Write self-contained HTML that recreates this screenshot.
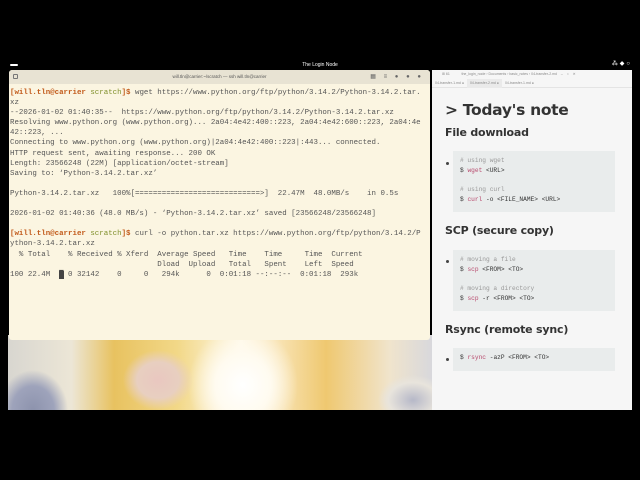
<!DOCTYPE html>
<html><head><meta charset="utf-8"><style>
*{margin:0;padding:0;box-sizing:border-box}
body{width:640px;height:480px;background:#000;position:relative;overflow:hidden;font-family:"Liberation Sans",sans-serif}
.top{position:absolute;left:0;top:60px;width:640px;height:10px;color:#fff;font-size:5px;text-align:center;line-height:10px}
.wall{position:absolute;left:8px;top:335px;width:424px;height:75px;
background:
radial-gradient(ellipse 35px 40px at 25px 75px,#8d93ad 0,#9ea3bb 60%,transparent 100%),
radial-gradient(ellipse 35px 30px at 150px 45px,#e9c7c0 0,#e8cfc0 60%,transparent 100%),
radial-gradient(ellipse 55px 60px at 235px 50px,#fff 0,#fffbf0 50%,transparent 100%),
radial-gradient(ellipse 35px 25px at 405px 65px,#b6b8c8 0,#e8e4dc 70%,transparent 100%),
linear-gradient(90deg,#d8d6d0 0,#ece6d6 15%,#e8c260 25%,#f2d888 40%,#fff8e8 55%,#efc870 75%,#f0e4cc 90%,#d8d8dc 100%)}
.term{position:absolute;left:9px;top:70px;width:421px;height:270px;background:#fbf5e1;border-radius:3px;overflow:hidden}
.tbar{height:14px;background:#e8e3d3;font-size:4.5px;color:#555;text-align:center;line-height:14px;position:relative}
.tbar .l{position:absolute;left:4px;top:4px;width:5px;height:5px;border:1px solid #777;border-radius:1px}
.tbar .r{position:absolute;right:6px;top:0;font-size:6px;color:#666;letter-spacing:3px}
pre{font-family:"Liberation Mono",monospace;font-size:7.45px;line-height:10.1px;color:#555;padding:4px 0 0 1px;white-space:pre}
.p{color:#c25a1a;font-weight:bold}.g{color:#7f8f2a}
.cur{background:#444;color:#444}
.note{position:absolute;left:432px;top:70px;width:200px;height:340px;background:#f6f6f6}
.nbar{height:9px;font-size:3.5px;color:#888;line-height:9px;padding-left:10px;white-space:nowrap;overflow:hidden}
.tabs{height:9px;font-size:3.5px;color:#888;line-height:9px;white-space:nowrap;border-bottom:1px solid #e4e4e4}
.tabs span{display:inline-block;padding:0 3px}
.tabs .a{background:#eaeaea}
h1{position:absolute;left:13px;top:31px;font-size:15.5px;color:#333;font-weight:bold;font-family:"DejaVu Sans",sans-serif;letter-spacing:-0.3px}
h2{position:absolute;left:13px;font-size:11px;color:#333;font-weight:bold;font-family:"DejaVu Sans",sans-serif;letter-spacing:-0.2px}
.code{position:absolute;left:21px;width:162px;background:#e9ecec;font-family:"Liberation Mono",monospace;font-size:6.2px;line-height:9.8px;color:#333;padding:5px 0 4px 7px;white-space:pre}
.code i{font-style:normal;color:#999}.code b{font-weight:normal;color:#b84b6e}
.dot{position:absolute;left:14px;width:3px;height:3px;background:#444;border-radius:50%}
</style></head><body>
<div class="top">The Login Node</div>
<div style="position:absolute;left:10px;top:64px;width:8px;height:2px;background:#fff;border-radius:1px"></div>
<div style="position:absolute;right:8px;top:60px;color:#fff;font-size:6px;letter-spacing:2px">⁂◆○</div>
<div class="wall"></div>
<div class="term">
<div class="tbar"><div class="l"></div>will.tln@carrier:~/scratch — ssh will.tln@carrier<div class="r">▦ ≡ ● ● ●</div></div>
<pre><span class="p">[will.tln@carrier </span><span class="g">scratch</span><span class="p">]$</span> wget https://www.python.org/ftp/python/3.14.2/Python-3.14.2.tar.
xz
--2026-01-02 01:40:35--  https://www.python.org/ftp/python/3.14.2/Python-3.14.2.tar.xz
Resolving www.python.org (www.python.org)... 2a04:4e42:400::223, 2a04:4e42:600::223, 2a04:4e
42::223, ...
Connecting to www.python.org (www.python.org)|2a04:4e42:400::223|:443... connected.
HTTP request sent, awaiting response... 200 OK
Length: 23566248 (22M) [application/octet-stream]
Saving to: ‘Python-3.14.2.tar.xz’

Python-3.14.2.tar.xz   100%[============================>]  22.47M  48.0MB/s    in 0.5s

2026-01-02 01:40:36 (48.0 MB/s) - ‘Python-3.14.2.tar.xz’ saved [23566248/23566248]

<span class="p">[will.tln@carrier </span><span class="g">scratch</span><span class="p">]$</span> curl -o python.tar.xz https://www.python.org/ftp/python/3.14.2/P
ython-3.14.2.tar.xz
  % Total    % Received % Xferd  Average Speed   Time    Time     Time  Current
                                 Dload  Upload   Total   Spent    Left  Speed
100 22.4M  <span class="cur">█</span> 0 32142    0     0   294k      0  0:01:18 --:--:--  0:01:18  293k</pre>
</div>
<div class="note">
<div class="nbar">⊞ 61 &nbsp;&nbsp;&nbsp;&nbsp;&nbsp;&nbsp;&nbsp;&nbsp;&nbsp;&nbsp; the_login_node › Documents › basic_notes › 04-transfer-2.md &nbsp;&nbsp; – &nbsp;&nbsp; ○ &nbsp;&nbsp; ✕</div>
<div class="tabs"><span>04-transfer-1.md ●</span><span class="a">04-transfer-2.md ●</span><span>04-transfer-1.md ●</span></div>
<h1>&gt; Today's note</h1>
<h2 style="top:56px">File download</h2>
<div class="dot" style="top:92px"></div>
<div class="code" style="top:81px;height:61px"><i># using wget</i>
$ <b>wget</b> &lt;URL&gt;

<i># using curl</i>
$ <b>curl</b> -o &lt;FILE_NAME&gt; &lt;URL&gt;</div>
<h2 style="top:154px">SCP (secure copy)</h2>
<div class="dot" style="top:190px"></div>
<div class="code" style="top:180px;height:61px"><i># moving a file</i>
$ <b>scp</b> &lt;FROM&gt; &lt;TO&gt;

<i># moving a directory</i>
$ <b>scp</b> -r &lt;FROM&gt; &lt;TO&gt;</div>
<h2 style="top:253px">Rsync (remote sync)</h2>
<div class="dot" style="top:288px"></div>
<div class="code" style="top:278px;height:23px">$ <b>rsync</b> -azP &lt;FROM&gt; &lt;TO&gt;</div>
</div>
</body></html>
